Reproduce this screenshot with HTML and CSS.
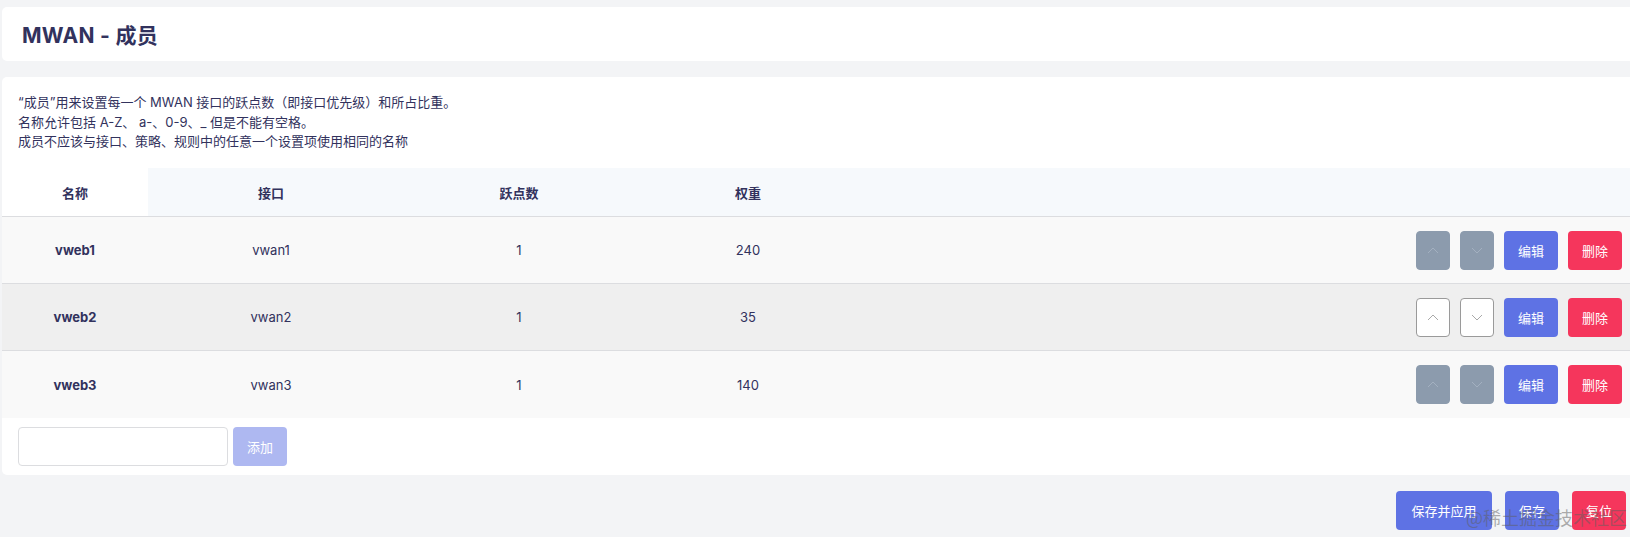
FILE: index.html
```html
<!DOCTYPE html>
<html lang="zh-CN">
<head>
<meta charset="utf-8">
<title>MWAN - 成员</title>
<link rel="stylesheet" href="styles.css">
</head>
<body>
<div class="page">
  <div class="card head-card">
    <h2 class="title">MWAN - 成员</h2>
  </div>

  <div class="card main-card">
    <div class="desc">
      <div>“成员”用来设置每一个 MWAN 接口的跃点数（即接口优先级）和所占比重。</div>
      <div>名称允许包括 A-Z、 a-、0-9、_ 但是不能有空格。</div>
      <div>成员不应该与接口、策略、规则中的任意一个设置项使用相同的名称</div>
    </div>

    <div class="table">
      <div class="tr th-row">
        <div class="th th-first">名称</div>
        <div class="th">接口</div>
        <div class="th">跃点数</div>
        <div class="th">权重</div>
        <div class="th"></div>
      </div>

      <div class="tr row">
        <div class="td name">vweb1</div>
        <div class="td">vwan1</div>
        <div class="td">1</div>
        <div class="td">240</div>
        <div class="td actions">
          <button class="btn move disabled"><svg viewBox="0 0 12 7" class="chev"><polyline points="1,6 6,1 11,6"/></svg></button>
          <button class="btn move disabled"><svg viewBox="0 0 12 7" class="chev"><polyline points="1,1 6,6 11,1"/></svg></button>
          <button class="btn primary">编辑</button>
          <button class="btn danger">删除</button>
        </div>
      </div>

      <div class="tr row row-alt">
        <div class="td name">vweb2</div>
        <div class="td">vwan2</div>
        <div class="td">1</div>
        <div class="td">35</div>
        <div class="td actions">
          <button class="btn move"><svg viewBox="0 0 12 7" class="chev"><polyline points="1,6 6,1 11,6"/></svg></button>
          <button class="btn move"><svg viewBox="0 0 12 7" class="chev"><polyline points="1,1 6,6 11,1"/></svg></button>
          <button class="btn primary">编辑</button>
          <button class="btn danger">删除</button>
        </div>
      </div>

      <div class="tr row last">
        <div class="td name">vweb3</div>
        <div class="td">vwan3</div>
        <div class="td">1</div>
        <div class="td">140</div>
        <div class="td actions">
          <button class="btn move disabled"><svg viewBox="0 0 12 7" class="chev"><polyline points="1,6 6,1 11,6"/></svg></button>
          <button class="btn move disabled"><svg viewBox="0 0 12 7" class="chev"><polyline points="1,1 6,6 11,1"/></svg></button>
          <button class="btn primary">编辑</button>
          <button class="btn danger">删除</button>
        </div>
      </div>
    </div>

    <div class="add-row">
      <input class="add-input" type="text">
      <button class="btn primary faded">添加</button>
    </div>
  </div>

  <div class="footer">
    <button class="btn primary wide">保存并应用</button>
    <button class="btn primary">保存</button>
    <button class="btn danger">复位</button>
    <span class="watermark">@稀土掘金技术社区</span>
  </div>
</div>
</body>
</html>
```

FILE: styles.css
```css
* { box-sizing: border-box; }

html, body {
  margin: 0;
  padding: 0;
  background: #f3f4f6;
}

body {
  font-family: Inter, "Noto Sans CJK SC", sans-serif;
  color: #32325d;
  font-size: 13px;
}

.page {
  position: relative;
  padding: 7px 0 0 2px;
  height: 537px;
  overflow: hidden;
}

.card {
  background: #ffffff;
  border-radius: 5px 0 0 5px;
}

.head-card {
  height: 54px;
  display: flex;
  align-items: center;
  padding-left: 20px;
}

.title {
  margin: 0;
  font-size: 21px;
  font-weight: 700;
  color: #32325d;
  letter-spacing: 0.3px;
}

.main-card {
  margin-top: 16px;
  height: 398px;
  display: flex;
  flex-direction: column;
}

.desc {
  padding: 16px 16px 0 16px;
  line-height: 19.5px;
  font-size: 13px;
  color: #32325d;
  height: 91px;
}

.table {
  display: flex;
  flex-direction: column;
}

.tr {
  display: grid;
  grid-template-columns: 146px 246px 250px 208px 1fr;
  align-items: stretch;
}

.th-row {
  height: 49px;
  background: #f6f9fc;
  border-bottom: 1px solid #dcdde0;
}

.th {
  display: flex;
  align-items: center;
  justify-content: center;
  font-weight: 700;
  font-size: 13px;
  color: #32325d;
}

.th-first {
  background: #ffffff;
}

.row {
  height: 67px;
  background: #f9f9f9;
  border-bottom: 1px solid #dcdde0;
}

.row-alt {
  background: #efefef;
}

.row.last {
  border-bottom: none;
}

.td {
  display: flex;
  align-items: center;
  justify-content: center;
  font-size: 13px;
  color: #32325d;
}

.td.name {
  font-weight: 700;
}

.td.actions {
  justify-content: flex-end;
  gap: 10px;
  padding-right: 8px;
}

.btn {
  height: 39px;
  min-width: 54px;
  border: none;
  border-radius: 4px;
  font-family: Inter, "Noto Sans CJK SC", sans-serif;
  font-size: 13px;
  color: #ffffff;
  display: inline-flex;
  align-items: center;
  justify-content: center;
  padding: 0 12px;
  cursor: pointer;
}

.btn.primary {
  background: #5e72e4;
}

.btn.danger {
  background: #f5365c;
}

.btn.faded {
  background: #aeb8f1;
}

.btn.wide {
  width: 96px;
}

.btn.move {
  min-width: 34px;
  width: 34px;
  padding: 0;
  background: #ffffff;
  border: 1px solid #9a9a9a;
}

.btn.move.disabled {
  background: #8c9bad;
  border-color: #8c9bad;
}

.chev {
  width: 12px;
  height: 7px;
  fill: none;
  stroke: #a9a9a9;
  stroke-width: 1;
}

.btn.move.disabled .chev {
  stroke: #a3b0c0;
}

.add-row {
  display: flex;
  gap: 5px;
  padding: 9px 0 0 16px;
}

.add-input {
  width: 210px;
  height: 39px;
  border: 1px solid #dcdde0;
  border-radius: 4px;
  background: #ffffff;
}

.footer {
  display: flex;
  justify-content: flex-end;
  gap: 13px;
  padding: 16px 4px 0 0;
  position: relative;
}

.watermark {
  position: absolute;
  right: 3px;
  top: 29px;
  z-index: 2;
  font-size: 18px;
  font-family: "Noto Sans CJK SC", sans-serif;
  font-weight: 400;
  color: rgba(95, 95, 95, 0.5);
  pointer-events: none;
}
```
